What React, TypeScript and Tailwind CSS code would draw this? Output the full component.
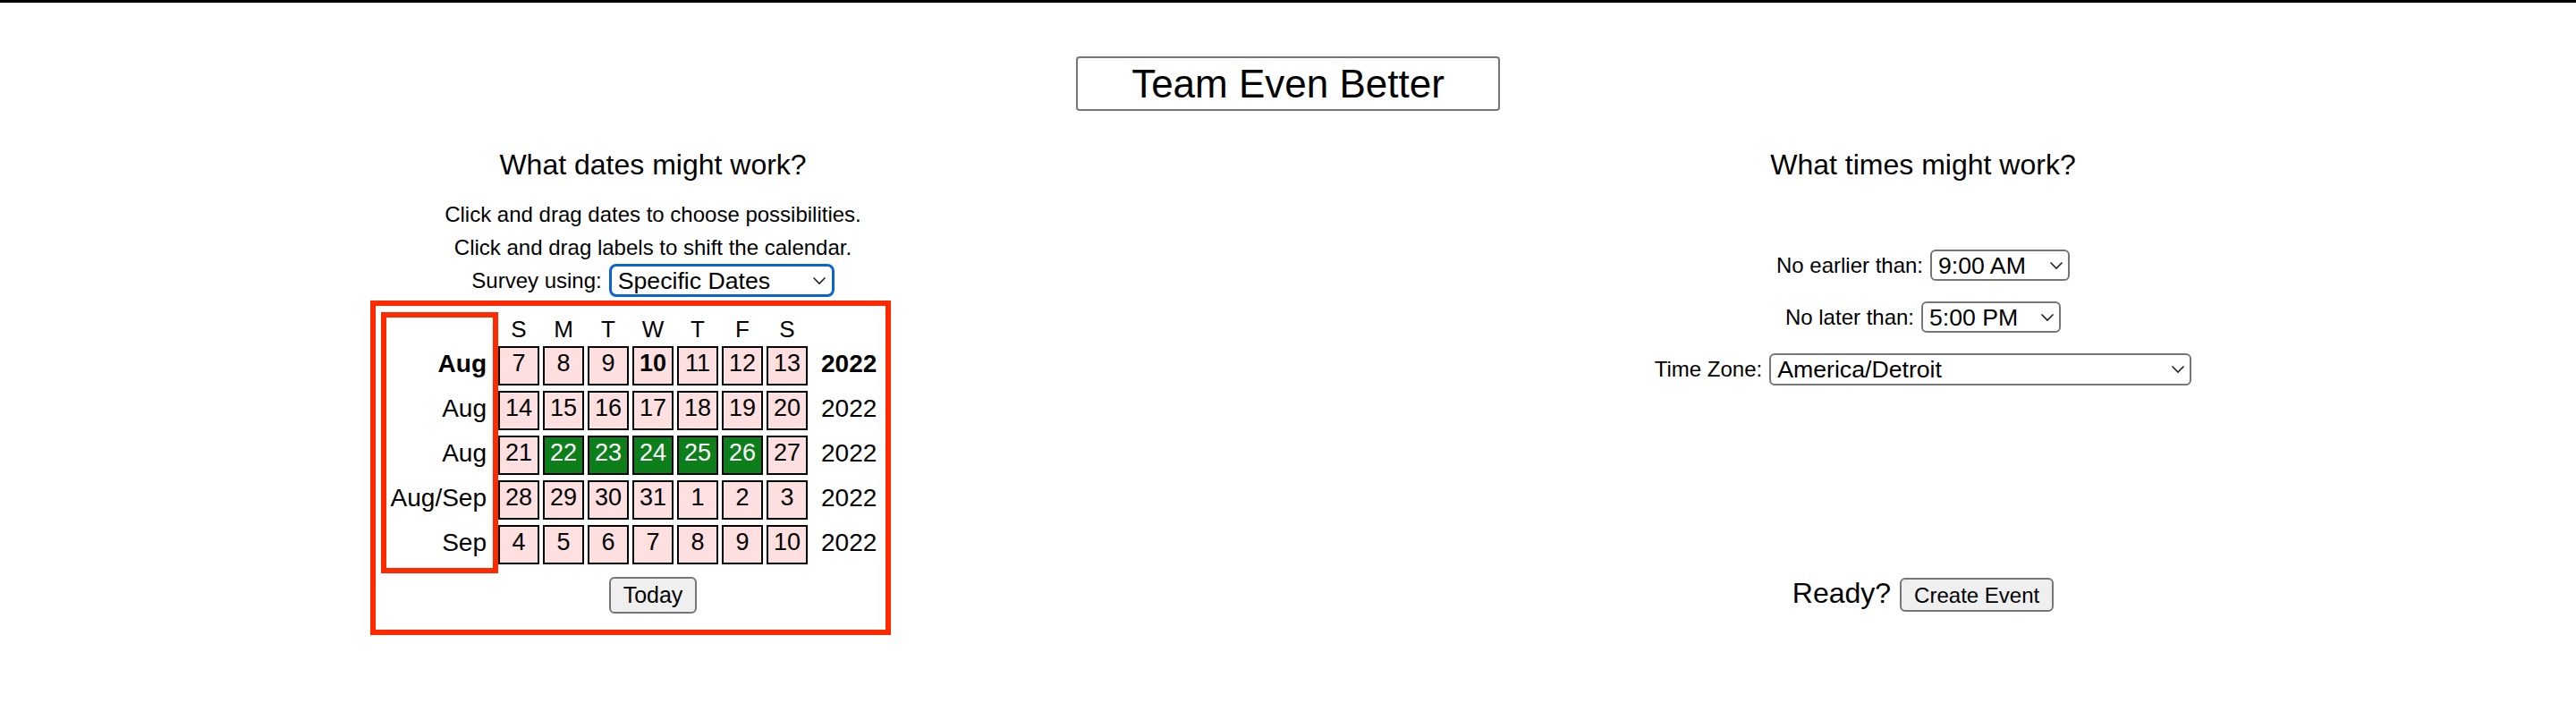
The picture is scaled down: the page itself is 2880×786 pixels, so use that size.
import React from 'react';

const RED = 'border-[#ff2a00]';

type Day = { n: number; on?: boolean; bold?: boolean };

const weeks: { label: string; year: string; bold?: boolean; days: Day[] }[] = [
  {
    label: 'Aug',
    year: '2022',
    bold: true,
    days: [{ n: 7 }, { n: 8 }, { n: 9 }, { n: 10, bold: true }, { n: 11 }, { n: 12 }, { n: 13 }],
  },
  {
    label: 'Aug',
    year: '2022',
    days: [{ n: 14 }, { n: 15 }, { n: 16 }, { n: 17 }, { n: 18 }, { n: 19 }, { n: 20 }],
  },
  {
    label: 'Aug',
    year: '2022',
    days: [
      { n: 21 },
      { n: 22, on: true },
      { n: 23, on: true },
      { n: 24, on: true },
      { n: 25, on: true },
      { n: 26, on: true },
      { n: 27 },
    ],
  },
  {
    label: 'Aug/Sep',
    year: '2022',
    days: [{ n: 28 }, { n: 29 }, { n: 30 }, { n: 31 }, { n: 1 }, { n: 2 }, { n: 3 }],
  },
  {
    label: 'Sep',
    year: '2022',
    days: [{ n: 4 }, { n: 5 }, { n: 6 }, { n: 7 }, { n: 8 }, { n: 9 }, { n: 10 }],
  },
];

const dayNames = ['S', 'M', 'T', 'W', 'T', 'F', 'S'];

function Chevron() {
  return (
    <svg width="16" height="10" viewBox="0 0 16 10" className="shrink-0">
      <polyline points="1.5,1.5 8,8 14.5,1.5" fill="none" stroke="#222" strokeWidth="1.6" />
    </svg>
  );
}

function FakeSelect({ value, className }: { value: string; className: string }) {
  return (
    <div className={`flex items-center justify-between bg-white text-[26.67px] leading-normal ${className}`}>
      <span>{value}</span>
      <Chevron />
    </div>
  );
}

function Calendar() {
  return (
    <div className={`mr-[50px] mt-[4px] w-[582px] border-[6px] ${RED} pb-[18px] pl-[6px] pt-[7px]`}>
      <div className="flex items-start">
        {/* month labels */}
        <div className={`flex w-[131px] flex-col items-end border-[6px] ${RED} pb-[4px] pr-[7px] text-[28px]`}>
          <div className="h-[26px]" />
          {weeks.map((w, i) => (
            <div key={i} className={`mt-[6px] flex h-[44px] items-center pb-[4px] ${w.bold ? 'font-bold' : ''}`}>
              {w.label}
            </div>
          ))}
        </div>

        {/* days */}
        <div className="flex flex-col items-center pt-[6px]">
          <div className="grid h-[26px] grid-cols-[repeat(7,46px)] gap-x-[4px] text-center text-[26px] leading-[26px]">
            {dayNames.map((d, i) => (
              <div key={i}>{d}</div>
            ))}
          </div>
          <div className="mt-[6px] grid grid-cols-[repeat(7,46px)] gap-x-[4px] gap-y-[6px] text-[27px]">
            {weeks.map((w) =>
              w.days.map((d, j) => (
                <div
                  key={`${w.label}-${d.n}-${j}`}
                  className={`flex h-[44px] items-center justify-center border-2 border-black pb-[6px] ${
                    d.on ? 'bg-[#0c7f1b] text-white' : 'bg-[#ffdfdf]'
                  } ${d.bold ? 'font-bold' : ''}`}
                >
                  {d.n}
                </div>
              ))
            )}
          </div>
          <button className="mt-[14px] h-[41px] rounded-[6px] border-2 border-[#767676] bg-[#efefef] px-[14px] text-[25px]">
            Today
          </button>
        </div>

        {/* years */}
        <div className="flex flex-col pl-[15px] pt-[6px] text-[28px]">
          <div className="h-[26px]" />
          {weeks.map((w, i) => (
            <div key={i} className={`mt-[6px] flex h-[44px] items-center pb-[4px] ${w.bold ? 'font-bold' : ''}`}>
              {w.year}
            </div>
          ))}
        </div>
      </div>
    </div>
  );
}

export default function App() {
  return (
    <div className="min-h-screen bg-white font-['Liberation_Sans',Arial,sans-serif] text-[24px] leading-normal text-black">
      <div className="h-[3px] bg-black" />

      <div className="flex justify-center pt-[60px]">
        <div className="flex h-[61px] w-[474px] items-center justify-center rounded-[4px] border-2 border-[#767676] text-[44px]">
          Team Even Better
        </div>
      </div>

      <div className="flex px-[20px] pt-[42px]">
        {/* dates */}
        <div className="flex flex-1 flex-col items-center">
          <h2 className="text-[32px] leading-[37px]">What dates might work?</h2>
          <div className="mt-[19px] text-center leading-[36.67px]">
            <p>Click and drag dates to choose possibilities.</p>
            <p>Click and drag labels to shift the calendar.</p>
          </div>
          <div className="flex h-[37px] items-center gap-[8px]">
            <span>Survey using:</span>
            <FakeSelect
              value="Specific Dates"
              className="h-[37px] w-[252px] rounded-[8px] border-[3px] border-[#0b63d6] pl-[7px] pr-[6px]"
            />
          </div>
          <Calendar />
        </div>

        {/* times */}
        <div className="flex flex-1 flex-col items-center">
          <h2 className="text-[32px] leading-[37px]">What times might work?</h2>
          <div className="mt-[76px] flex flex-col items-center gap-[23px]">
            <div className="flex h-[35px] items-center gap-[8px]">
              <span>No earlier than:</span>
              <FakeSelect
                value="9:00 AM"
                className="h-[35px] w-[156px] rounded-[6px] border-2 border-[#767676] pl-[7px] pr-[5px]"
              />
            </div>
            <div className="flex h-[35px] items-center gap-[8px]">
              <span>No later than:</span>
              <FakeSelect
                value="5:00 PM"
                className="h-[35px] w-[156px] rounded-[6px] border-2 border-[#767676] pl-[7px] pr-[5px]"
              />
            </div>
            <div className="flex h-[36px] items-center gap-[8px]">
              <span>Time Zone:</span>
              <FakeSelect
                value="America/Detroit"
                className="h-[36px] w-[472px] rounded-[6px] border-2 border-[#767676] pl-[7px] pr-[5px]"
              />
            </div>
          </div>
          <div className="mt-[208px] flex items-baseline gap-[10px]">
            <span className="text-[32px]">Ready?</span>
            <button className="h-[38px] rounded-[6px] border-2 border-[#767676] bg-[#efefef] px-[14px] text-[24px]">
              Create Event
            </button>
          </div>
        </div>
      </div>
    </div>
  );
}
